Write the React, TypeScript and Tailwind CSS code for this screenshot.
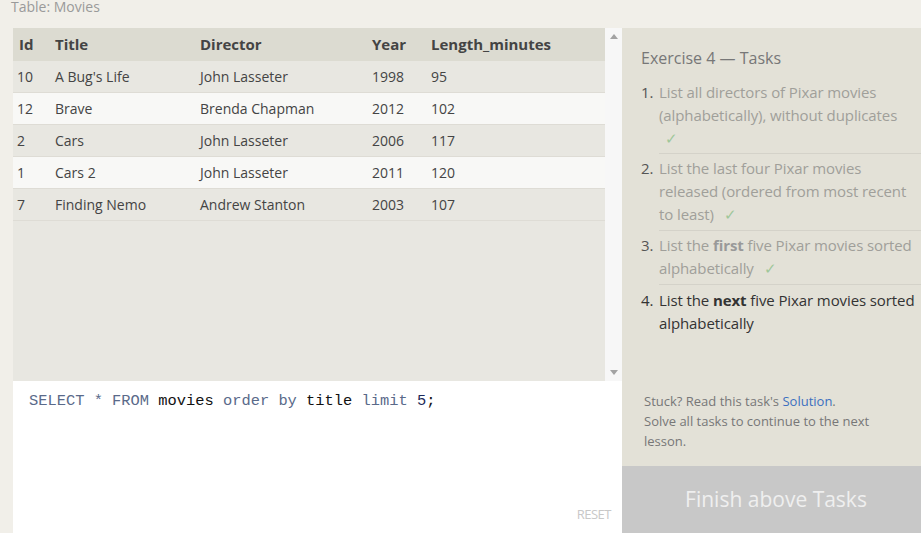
import React from "react";

const rows = [
  ["10", "A Bug's Life", "John Lasseter", "1998", "95"],
  ["12", "Brave", "Brenda Chapman", "2012", "102"],
  ["2", "Cars", "John Lasseter", "2006", "117"],
  ["1", "Cars 2", "John Lasseter", "2011", "120"],
  ["7", "Finding Nemo", "Andrew Stanton", "2003", "107"],
];

const Check = () => <span className="ml-[6px] text-[#9fc79a]">✓</span>;

export default function App() {
  const sans = { fontFamily: '"Open Sans", "Noto Sans", sans-serif' };
  return (
    <div className="w-[921px] h-[533px] bg-[#f1efe9] flex flex-col overflow-hidden" style={sans}>
      <div className="h-[28px] pl-[11px] text-[14px] leading-[14px] text-[#9a9a9a]">Table: Movies</div>
      <div className="flex flex-1 pl-[13px] min-h-0">
        <div className="w-[609px] flex flex-col">
          <div className="h-[353px] flex bg-[#e8e7e1]">
            <div className="flex-1">
              <div className="h-[33px] bg-[#dcdbd1] flex items-center text-[15px] font-bold text-[#444]">
                <div className="w-[42px] pl-[6px]">Id</div>
                <div className="w-[145px]">Title</div>
                <div className="w-[172px]">Director</div>
                <div className="w-[59px]">Year</div>
                <div>Length_minutes</div>
              </div>
              {rows.map((r, i) => (
                <div
                  key={i}
                  className={`h-[32px] flex items-center text-[14px] text-[#444] ${i % 2 === 1 ? "bg-[#f8f8f6]" : "bg-[#e8e7e1]"} border-b border-[#dedcd5]`}
                >
                  <div className="w-[42px] pl-[4px]">{r[0]}</div>
                  <div className="w-[145px]">{r[1]}</div>
                  <div className="w-[172px]">{r[2]}</div>
                  <div className="w-[59px]">{r[3]}</div>
                  <div>{r[4]}</div>
                </div>
              ))}
            </div>
            <div className="w-[17px] bg-[#f7f7f7] flex flex-col items-center justify-between py-[6px]">
              <svg width="8" height="5" viewBox="0 0 8 5"><path d="M0 5 L4 0 L8 5 Z" fill="#a3a3a3" /></svg>
              <svg width="8" height="5" viewBox="0 0 8 5"><path d="M0 0 L4 5 L8 0 Z" fill="#a3a3a3" /></svg>
            </div>
          </div>
          <div className="flex-1 bg-white relative">
            <div
              className="pt-[10px] pl-[16px] text-[15.4px] leading-[20px]"
              style={{ fontFamily: '"Liberation Mono", "DejaVu Sans Mono", monospace' }}
            >
              <span className="text-[#5a6a8a]">SELECT * FROM </span>
              <span className="text-[#111]">movies </span>
              <span className="text-[#5a6a8a]">order by </span>
              <span className="text-[#111]">title </span>
              <span className="text-[#5a6a8a]">limit </span>
              <span className="text-[#1c2a5a]">5</span>
              <span className="text-[#111]">;</span>
            </div>
            <div className="absolute right-[11px] bottom-[9px] text-[13px] text-[#c8c8c8] tracking-[-0.5px]">RESET</div>
          </div>
        </div>
        <div className="flex-1 bg-[#e3e1d7] flex flex-col">
          <div className="flex-1 pl-[19px]">
            <div className="pt-[19px] text-[16px] leading-[22px] text-[#777]">Exercise 4 — Tasks</div>
            <ol className="mt-[12px] text-[15px] leading-[23px] tracking-[-0.1px]">
              <li className="flex">
                <span className="w-[18px] text-[#555]">1.</span>
                <div className="flex-1 text-[#a09f9a] border-b border-[#d4d2c9] pb-[3px]">
                  List all directors of Pixar movies (alphabetically), without duplicates
                  <div><Check /></div>
                </div>
              </li>
              <li className="flex pt-[3px]">
                <span className="w-[18px] text-[#555]">2.</span>
                <div className="flex-1 text-[#a09f9a] border-b border-[#d4d2c9] pb-[4px]">
                  List the last four Pixar movies released (ordered from most recent to least) <Check />
                </div>
              </li>
              <li className="flex pt-[3px]">
                <span className="w-[18px] text-[#555]">3.</span>
                <div className="flex-1 text-[#a09f9a] border-b border-[#d4d2c9] pb-[4px]">
                  List the <b className="text-[#999]">first</b> five Pixar movies sorted alphabetically <Check />
                </div>
              </li>
              <li className="flex pt-[4px]">
                <span className="w-[18px] text-[#333]">4.</span>
                <div className="flex-1 text-[#333]">
                  List the <b>next</b> five Pixar movies sorted alphabetically
                </div>
              </li>
            </ol>
          </div>
          <div className="pl-[22px] pb-[15px] w-[272px] text-[13px] leading-[20px] text-[#777]">
            Stuck? Read this task's <span className="text-[#3b6fbf]">Solution</span>.
            <br />
            Solve all tasks to continue to the next lesson.
          </div>
          <div className="h-[67px] bg-[#c8c8c8] flex items-center justify-center pl-[9px] text-[21px] text-[#efefef]">
            Finish above Tasks
          </div>
        </div>
      </div>
    </div>
  );
}
